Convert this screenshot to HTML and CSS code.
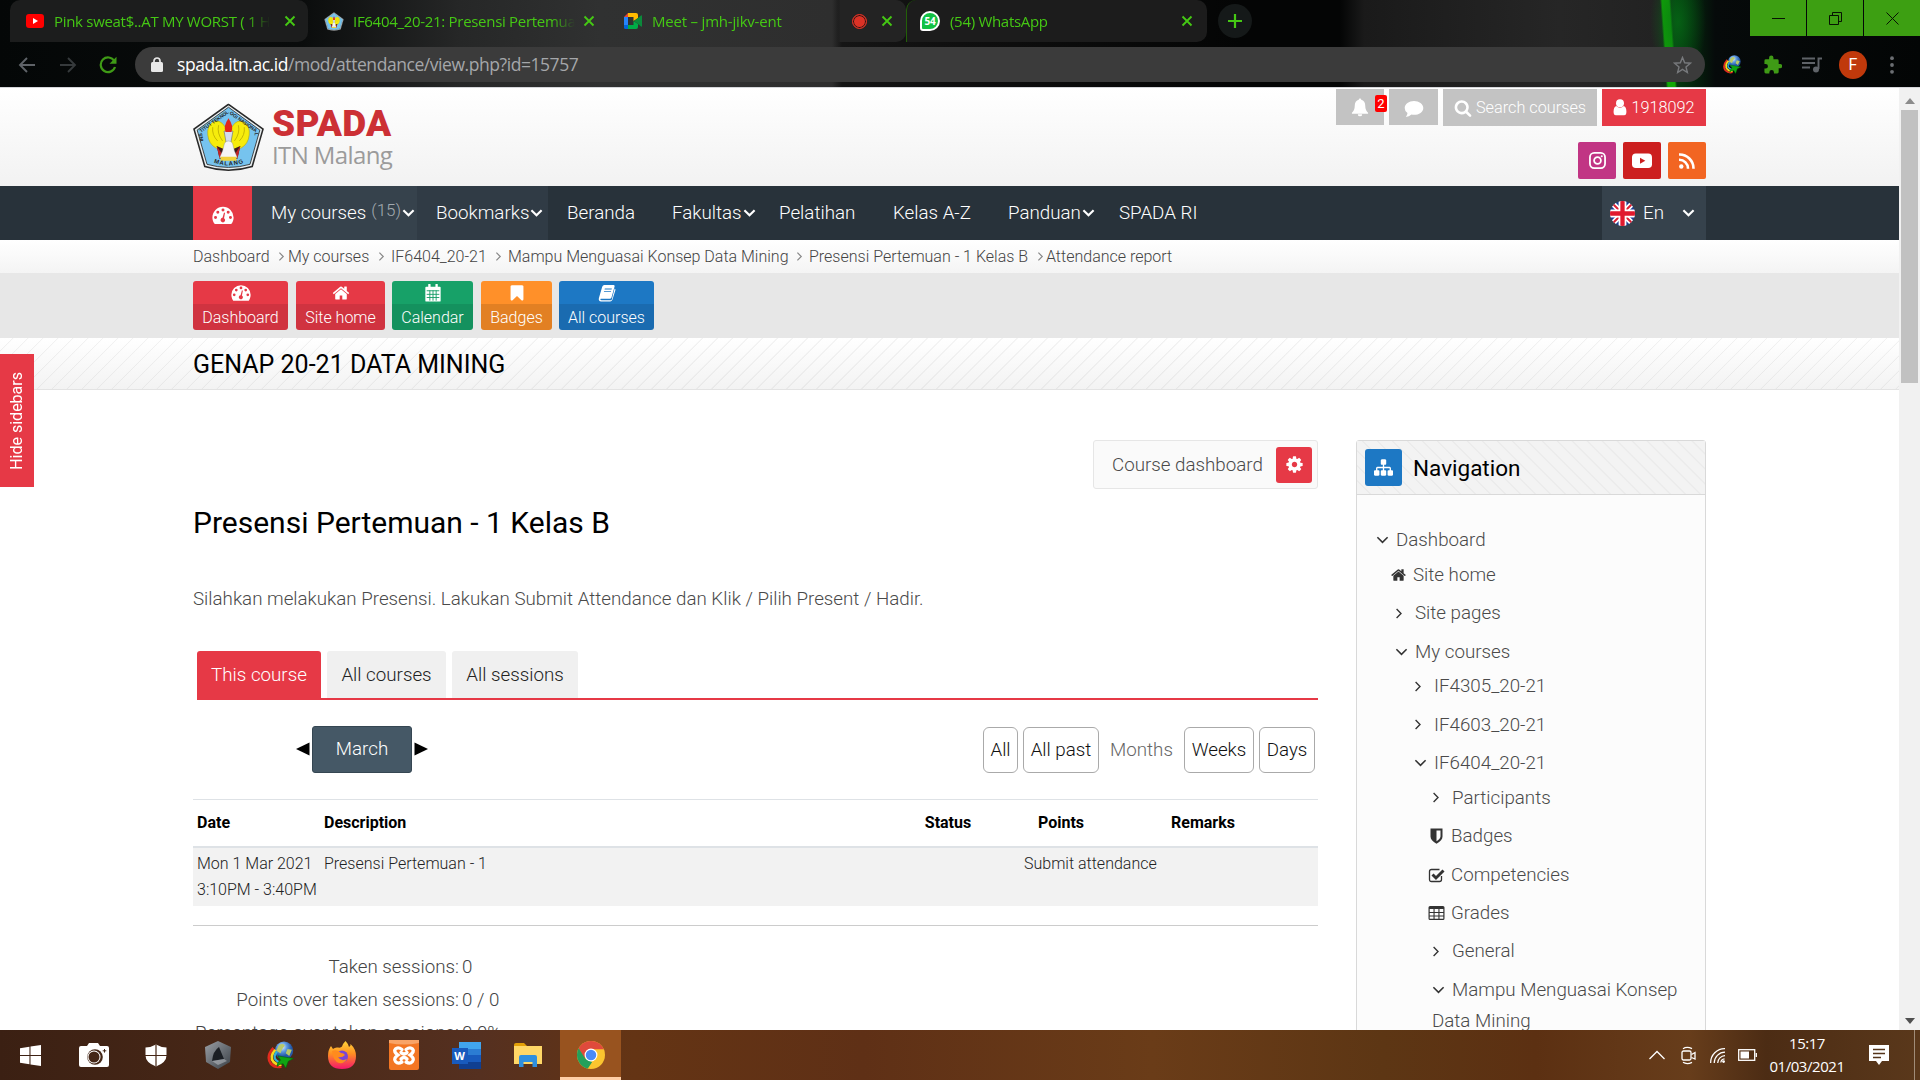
FILE: index.html
```html
<!DOCTYPE html>
<html lang="en">
<head>
<meta charset="utf-8">
<title>IF6404_20-21: Presensi Pertemuan - 1 Kelas B</title>
<link rel="stylesheet" href="styles.css">
</head>
<body>
<svg class="defs" aria-hidden="true">
  <defs>
    <linearGradient id="grad-fox" x1="0" y1="0" x2="0" y2="1"><stop offset="0" stop-color="#ffd43a"/><stop offset=".45" stop-color="#ff9022"/><stop offset="1" stop-color="#f5156c"/></linearGradient>
    <linearGradient id="grad-hex" x1="0" y1="0" x2="1" y2="1"><stop offset="0" stop-color="#9a9fa5"/><stop offset="1" stop-color="#3a4046"/></linearGradient>
    <radialGradient id="grad-globe" cx=".4" cy=".3"><stop offset="0" stop-color="#e9f3ff"/><stop offset=".5" stop-color="#5f9be0"/><stop offset="1" stop-color="#2458a8"/></radialGradient>
    <clipPath id="clip-flag"><circle cx="16" cy="16" r="16"/></clipPath>
    <clipPath id="clip-chrome"><circle cx="24" cy="24" r="24"/></clipPath>
  </defs>
  <symbol id="i-home" viewBox="0 0 1792 1792"><path d="M1472 992v480q0 26-19 45t-45 19h-384v-384h-256v384h-384q-26 0-45-19t-19-45v-480q0-1 .5-3t.5-3l575-474 575 474q1 2 1 6zm223-69l-62 74q-8 9-21 11h-3q-13 0-21-7l-692-577-692 577q-12 8-24 7-13-2-21-11l-62-74q-8-10-7-23.5t11-21.5l719-599q32-26 76-26t76 26l244 204v-195q0-14 9-23t23-9h192q14 0 23 9t9 23v408l219 182q10 8 11 21.5t-7 23.5z"/></symbol>
  <symbol id="i-bookmark" viewBox="0 0 1792 1792"><path d="M1420 128q23 0 44 9 33 13 52.500 41t19.500 62v1289q0 34-19.500 62t-52.500 41q-19 8-44 8-48 0-83-32l-441-424-441 424q-36 33-83 33-23 0-44-9-33-13-52.500-41t-19.500-62v-1289q0-34 19.500-62t52.500-41q21-9 44-9h1048z"/></symbol>
  <symbol id="i-cog" viewBox="0 0 1792 1792"><path d="M1152 896q0-106-75-181t-181-75-181 75-75 181 75 181 181 75 181-75 75-181zm512-109v222q0 12-8 23t-20 13l-185 28q-19 54-39 91 35 50 107 138 10 12 10 25t-9 23q-27 37-99 108t-94 71q-12 0-26-9l-138-108q-44 23-91 38-16 136-29 186-7 28-36 28h-222q-14 0-24.500-8.500t-11.500-21.500l-28-184q-49-16-90-37l-141 107q-10 9-25 9-14 0-25-11-126-114-165-168-7-10-7-23 0-12 8-23 15-21 51-66.500t54-70.500q-27-50-41-99l-183-27q-13-2-21-12.500t-8-23.500v-222q0-12 8-23t19-13l186-28q14-46 39-92-40-57-107-138-10-12-10-24 0-10 9-23 26-36 98.500-107.500t94.500-71.500q13 0 26 10l138 107q44-23 91-38 16-136 29-186 7-28 36-28h222q14 0 24.500 8.500t11.500 21.500l28 184q49 16 90 37l142-107q9-9 24-9 13 0 25 10 129 119 165 170 7 8 7 22 0 12-8 23-15 21-51 66.500t-54 70.500q26 50 41 98l183 28q13 2 21 12.500t8 23.500z"/></symbol>
  <symbol id="i-sitemap" viewBox="0 0 1792 1792"><path d="M1792 1248v320q0 40-28 68t-68 28h-320q-40 0-68-28t-28-68v-320q0-40 28-68t68-28h96v-192h-512v192h96q40 0 68 28t28 68v320q0 40-28 68t-68 28h-320q-40 0-68-28t-28-68v-320q0-40 28-68t68-28h96v-192h-512v192h96q40 0 68 28t28 68v320q0 40-28 68t-68 28h-320q-40 0-68-28t-28-68v-320q0-40 28-68t68-28h96v-192q0-52 38-90t90-38h512v-192h-96q-40 0-68-28t-28-68v-320q0-40 28-68t68-28h320q40 0 68 28t28 68v320q0 40-28 68t-68 28h-96v192h512q52 0 90 38t38 90v192h96q40 0 68 28t28 68z"/></symbol>
  <symbol id="i-search" viewBox="0 0 1792 1792"><path d="M1216 832q0-185-131.500-316.500t-316.500-131.500-316.500 131.500-131.500 316.500 131.500 316.500 316.500 131.500 316.500-131.500 131.500-316.500zm512 832q0 52-38 90t-90 38q-54 0-90-38l-343-342q-179 124-399 124-143 0-273.500-55.500t-225-150-150-225-55.500-273.500 55.500-273.500 150-225 225-150 273.500-55.500 273.500 55.500 225 150 150 225 55.500 273.500q0 220-124 399l343 343q37 37 37 90z"/></symbol>
  <symbol id="i-gauge" viewBox="0 0 28 24"><path fill-rule="evenodd" d="M14 1A13.500 13.500 0 0 0 .5 14.500c0 2.800.8 5.300 2.200 7.500.3.500.7.700 1.200.7h20.200c.5 0 .9-.2 1.200-.7 1.400-2.200 2.200-4.700 2.200-7.500A13.500 13.500 0 0 0 14 1zM4.500 12.600a1.900 1.900 0 1 1 0 3.800 1.900 1.900 0 0 1 0-3.800zM7.400 6a1.900 1.900 0 1 1 0 3.800 1.900 1.900 0 0 1 0-3.800zM14 3a1.900 1.900 0 1 1 0 3.800A1.900 1.900 0 0 1 14 3zM20.600 6a1.900 1.900 0 1 1 0 3.800 1.900 1.900 0 0 1 0-3.800zM23.500 12.600a1.900 1.900 0 1 1 0 3.800 1.900 1.900 0 0 1 0-3.800zM15.300 8.300l1.300.4-1.300 6.700a2.900 2.900 0 1 1-1.900-.4z"/></symbol>
  <symbol id="i-calendar" viewBox="0 0 18 20"><path d="M1.500 3h15a1 1 0 0 1 1 1v14.500a1 1 0 0 1-1 1h-15a1 1 0 0 1-1-1V4a1 1 0 0 1 1-1z"/><path d="M5 .8v4M13 .8v4" stroke="currentColor" stroke-width="2.600" stroke-linecap="round"/><path d="M2 7.500h14M2 11.500h14M2 15h14M5.500 7v11.500M9 7v11.500M12.500 7v11.500" stroke="#149c64" stroke-width="1" fill="none"/></symbol>
  <symbol id="i-book" viewBox="0 0 20 20"><path fill-rule="evenodd" d="M7 1h10.500q1.300.2 1 1.500L15 15q-.4 1.500-2 1.500H3.200q-.7 0-.6.700.2.900 1.400.9h10q1 0 1.300-1L18.500 5q1.200.6.900 1.800L16 17.500q-.6 2-2.500 2H3.500Q.2 19 1 15.500L4.700 3Q5.300 1 7 1zm.6 4L7.300 6h7.800l.3-1zM6.800 8l-.3 1h7.800l.3-1z"/></symbol>
  <symbol id="i-bell" viewBox="0 0 18 20"><path d="M9 .5a1.300 1.300 0 0 1 1.300 1.400C13 2.500 14.500 4.800 14.500 8c0 4 1.300 6.200 3 7.600v.9H.5v-.9C2.200 14.200 3.500 12 3.500 8c0-3.200 1.500-5.500 4.200-6.100A1.300 1.300 0 0 1 9 .5zM6.700 17h4.600a2.300 2.300 0 0 1-4.600 0z"/></symbol>
  <symbol id="i-comment" viewBox="0 0 20 18"><path d="M10 1c5 0 9.300 2.900 9.300 6.900S15 14.800 10 14.800q-1.300 0-2.500-.2Q5 16.800 1.800 17q1.500-1.600 1.700-3.900Q.7 11 .7 7.900C.7 3.900 5 1 10 1z"/></symbol>
  <symbol id="i-user" viewBox="0 0 14 18"><circle cx="7" cy="4.500" r="4.200"/><path d="M3 7.500q1.800 1.800 4 1.800t4-1.800q2.700.8 2.800 6 0 3.800-2.500 3.800H2.700q-2.500 0-2.500-3.800.1-5.200 2.800-6z"/></symbol>
  <symbol id="i-down" viewBox="0 0 14 10"><path class="chev" d="M1.500 2l5.500 5.500L12.500 2"/></symbol>
  <symbol id="i-right" viewBox="0 0 10 14"><path class="chev" d="M2 1.500L7.500 7 2 12.500"/></symbol>
  <symbol id="i-x" viewBox="0 0 12 12"><path d="M1.500 1.500l9 9m0-9l-9 9" fill="none" stroke="currentColor" stroke-width="1.900"/></symbol>
  <symbol id="i-crest" viewBox="0 0 72 69">
    <path d="M36 .8L71 26 60 64Q36 71.500 12 64L1 26z" fill="#e8eef0" stroke="#2a2a2a" stroke-width="1.600"/>
    <path d="M36 3.800L67.800 27 57.800 61.700Q36 68 14.200 61.700L4.200 27z" fill="#76c3ee" stroke="#333" stroke-width=".9"/>
    <path d="M32 23Q27 15.500 20 19q-6 4-5 13 1 9 8 13l13 5 13-5q7-4 8-13 1-9-5-13-7-3.500-12 4l-4 6z" fill="#f6ec0c" stroke="#b9a800" stroke-width=".6"/>
    <path d="M20 24q-1 8 5 14M26 22q-2 8 4 16M52 24q1 8-5 14M46 22q2 8-4 16" fill="none" stroke="#b9a800" stroke-width=".8"/>
    <path d="M31.500 28h9l-2.500 14h-4z" fill="#d3dcec" stroke="#667" stroke-width=".6"/>
    <path d="M36 15q5.500 8 3 14h-6q-2.500-6 3-14z" fill="#e1261c"/>
    <path d="M24 43l9 4 3 3 3-3 9-4-3 13H27z" fill="#3c1a1c"/><path d="M24 43l6 9-3 4zM48 43l-6 9 3 4z" fill="#c32425"/>
    <path d="M32 40q4-4 8 0l2 8 3 7H27l3-7z" fill="#f5f5f5" stroke="#888" stroke-width=".4"/><path d="M28 54h16v4H28z" fill="#f1d23a"/>
  </symbol>
  <symbol id="i-idm" viewBox="0 0 32 32">
    <circle cx="20" cy="11" r="10.500" fill="url(#grad-globe)"/><path d="M14 5q4-3 7 0l-3 4-2 5-5-3zM24 9l5 1-3 7-4-3z" fill="#b8c96a"/>
    <path d="M8 8Q-1 18 5 26q5 5 12 3" fill="none" stroke="#e32b1e" stroke-width="3"/>
    <path d="M10 10Q3 18 8 24q4 4 9 3" fill="none" stroke="#f7d71f" stroke-width="3"/>
    <path d="M12 12q-5 6-1 10 3 3 7 2" fill="none" stroke="#2fb0d8" stroke-width="2.500"/>
    <path d="M13 17l18 3-6 3-3 8-3-5q-4 0-7 3 0-5 4-7z" fill="#0fa512" stroke="#075e08" stroke-width=".7"/>
  </symbol>
</svg>

<header class="browser">
  <div class="tabstrip">
    <div class="tab tab--first">
      <svg class="tab__icon" viewBox="0 0 18 14"><rect width="18" height="14" rx="3" fill="#f00"/><path d="M7 4l5 3-5 3z" fill="#fff"/></svg>
      <span class="tab__title">Pink sweat$..AT MY WORST ( 1 HOUR )</span>
      <svg class="tab__close"><use href="#i-x"/></svg>
    </div>
    <div class="tab tab--active">
      <svg class="tab__icon tab__icon--crest"><use href="#i-crest"/></svg>
      <span class="tab__title">IF6404_20-21: Presensi Pertemuan - 1</span>
      <svg class="tab__close"><use href="#i-x"/></svg>
    </div>
    <div class="tab tab--meet">
      <svg class="tab__icon" viewBox="0 0 18 16"><path d="M4 0h8q2 0 2 2v3L9.500 8V4H4z" fill="#ffba00"/><path d="M0 4h4v8H0z" fill="#2684fc"/><path d="M4 0v4H0z" fill="#ea4335"/><path d="M0 12h4v4H1.500Q0 16 0 14.500z" fill="#0066da"/><path d="M4 12h5.500V8L14 11v3q0 2-2 2H4z" fill="#00ac47"/><path d="M14 5l3-2.500q1-.5 1 .5v10q0 1-1 .5L14 11 10 8z" fill="#0b8a3b"/></svg>
      <span class="tab__title">Meet – jmh-jikv-ent</span>
      <span class="tab__record"></span>
      <svg class="tab__close"><use href="#i-x"/></svg>
    </div>
    <div class="tab tab--whatsapp">
      <span class="wa-badge">54</span>
      <span class="tab__title">(54) WhatsApp</span>
      <svg class="tab__close"><use href="#i-x"/></svg>
    </div>
    <span class="new-tab"><svg viewBox="0 0 14 14"><path d="M7 0v14M0 7h14" stroke="currentColor" stroke-width="2.200"/></svg></span>
    <div class="win-buttons">
      <span><svg viewBox="0 0 13 13"><path d="M0 6.500h13"/></svg></span>
      <span><svg viewBox="0 0 13 13"><path d="M.5 3.500h9v9h-9zM3.500 3V.5h9v9H10"/></svg></span>
      <span><svg viewBox="0 0 13 13"><path d="M.5.5l12 12m0-12l-12 12"/></svg></span>
    </div>
  </div>
  <div class="toolbar">
    <svg class="tool tool--back" viewBox="0 0 18 16"><path d="M17 8H2m7-7L2 8l7 7"/></svg>
    <svg class="tool tool--forward" viewBox="0 0 18 16"><path d="M1 8h15M9 1l7 7-7 7"/></svg>
    <svg class="tool tool--reload" viewBox="0 0 18 18"><path d="M15.300 5A7.300 7.300 0 1 0 16 11"/><path d="M17.500.8v7H10.500z" fill="currentColor" stroke="none"/></svg>
    <div class="omnibox">
      <svg class="omnibox__lock" viewBox="0 0 12 15"><rect y="5" width="12" height="10" rx="1.500" fill="#e8e8e8"/><path d="M3 6V4a3 3 0 0 1 6 0v2" fill="none" stroke="#e8e8e8" stroke-width="1.700"/></svg>
      <span class="omnibox__url"><b>spada.itn.ac.id</b>/mod/attendance/view.php?id=15757</span>
      <svg class="omnibox__star" viewBox="0 0 20 19"><path d="M10 1.500l2.300 5.600 6 .5-4.600 3.900 1.400 5.900L10 14.200l-5.100 3.200 1.400-5.900L1.700 7.600l6-.5z" fill="none" stroke="#77797c" stroke-width="1.500"/></svg>
    </div>
    <svg class="tool tool--idm"><use href="#i-idm"/></svg>
    <svg class="tool tool--puzzle" viewBox="0 0 20 20"><path d="M18 9.500h-1.500V6q0-1.500-1.500-1.500h-4V2.800a2.300 2.300 0 0 0-4.600 0v1.700H3Q1.500 4.500 1.500 6v3.500h1.300a2.400 2.400 0 0 1 0 4.800H1.500V18q0 1.500 1.500 1.500h3.700v-1.300a2.400 2.400 0 0 1 4.800 0v1.300H15q1.500 0 1.500-1.500v-4H18a2.200 2.200 0 0 0 0-4.500z" fill="#3f9a16" stroke="none"/></svg>
    <svg class="tool tool--queue" viewBox="0 0 20 16"><path d="M0 1.500h13M0 6h13M0 10.500h8M16.500 12V1.500H20"/><circle cx="14" cy="12.500" r="3" fill="#5f6368" stroke="none"/></svg>
    <span class="avatar">F</span>
    <svg class="tool tool--dots" viewBox="0 0 4 18"><circle cx="2" cy="2.200" r="1.900"/><circle cx="2" cy="9" r="1.900"/><circle cx="2" cy="15.800" r="1.900"/></svg>
  </div>
</header>

<div class="viewport">
  <div class="site">
    <div class="topbar">
      <div class="brand">
        <svg class="brand__crest" viewBox="0 0 72 69">
          <use href="#i-crest" width="72" height="69"/>
          <path id="crest-top" d="M10.500 38L9 29 36 10 63 29 61.500 39" fill="none"/>
          <path id="crest-bottom" d="M21 60q15 5.500 31 0" fill="none"/>
          <text class="crest-text"><textPath href="#crest-top">INSTITUT TEKNOLOGI NASIONAL</textPath></text>
          <text class="crest-text crest-text--lower"><textPath href="#crest-bottom">MALANG</textPath></text>
        </svg>
        <div class="brand__name"><span class="brand__title">SPADA</span><span class="brand__sub">ITN Malang</span></div>
      </div>
      <div class="topbar__right">
        <div class="userbar">
          <span class="ubtn ubtn--bell"><svg><use href="#i-bell"/></svg><em>2</em></span>
          <span class="ubtn ubtn--comment"><svg><use href="#i-comment"/></svg></span>
          <span class="ubtn ubtn--search"><svg><use href="#i-search"/></svg><span>Search courses</span></span>
          <span class="ubtn ubtn--user"><svg><use href="#i-user"/></svg><span>1918092</span></span>
        </div>
        <div class="social">
          <span class="social__ig"><svg viewBox="0 0 18 18"><rect x="1" y="1" width="16" height="16" rx="4.500" fill="none" stroke="#fff" stroke-width="1.900"/><circle cx="9" cy="9" r="3.600" fill="none" stroke="#fff" stroke-width="1.900"/><circle cx="13.500" cy="4.500" r="1.100" fill="#fff"/></svg></span>
          <span class="social__yt"><svg viewBox="0 0 20 16"><rect y=".5" width="20" height="14.500" rx="3.800" fill="#fff"/><path d="M8 4.800l5.300 3L8 10.800z" fill="#cc1f1f"/></svg></span>
          <span class="social__rss"><svg viewBox="0 0 16 16"><circle cx="2.300" cy="13.500" r="2.200" fill="#fff"/><path d="M0 6.800a8.700 8.700 0 0 1 9 9M0 1.500a14 14 0 0 1 14.500 14.300" fill="none" stroke="#fff" stroke-width="2.600"/></svg></span>
        </div>
      </div>
    </div>

    <nav class="mainnav">
      <a class="mainnav__dash"><svg><use href="#i-gauge"/></svg></a>
      <a class="mainnav__item mainnav__item--courses"><span>My courses</span><sup>(15)</sup><svg><use href="#i-down"/></svg></a>
      <a class="mainnav__item mainnav__item--bookmarks"><span>Bookmarks</span><svg><use href="#i-down"/></svg></a>
      <a class="mainnav__item mainnav__item--beranda"><span>Beranda</span></a>
      <a class="mainnav__item mainnav__item--fakultas"><span>Fakultas</span><svg><use href="#i-down"/></svg></a>
      <a class="mainnav__item mainnav__item--pelatihan"><span>Pelatihan</span></a>
      <a class="mainnav__item mainnav__item--kelas"><span>Kelas A-Z</span></a>
      <a class="mainnav__item mainnav__item--panduan"><span>Panduan</span><svg><use href="#i-down"/></svg></a>
      <a class="mainnav__item"><span>SPADA RI</span></a>
      <a class="lang">
        <svg class="lang__flag" viewBox="0 0 32 32"><g clip-path="url(#clip-flag)"><path fill="#1d3f94" d="M0 0h32v32H0z"/><path d="M0 0l32 32M32 0L0 32" stroke="#fff" stroke-width="7"/><path d="M0 0l32 32M32 0L0 32" stroke="#dd2033" stroke-width="2.500"/><path d="M16 0v32M0 16h32" stroke="#fff" stroke-width="10"/><path d="M16 0v32M0 16h32" stroke="#e01a2e" stroke-width="5.500"/></g></svg>
        <span>En</span><svg class="lang__arrow"><use href="#i-down"/></svg>
      </a>
    </nav>

    <div class="crumbs">
      <a class="crumb crumb--1">Dashboard</a><svg><use href="#i-right"/></svg>
      <a class="crumb crumb--2">My courses</a><svg><use href="#i-right"/></svg>
      <a class="crumb crumb--3">IF6404_20-21</a><svg><use href="#i-right"/></svg>
      <a class="crumb crumb--4">Mampu Menguasai Konsep Data Mining</a><svg><use href="#i-right"/></svg>
      <a class="crumb crumb--5">Presensi Pertemuan - 1 Kelas B</a><svg><use href="#i-right"/></svg>
      <span class="crumb crumb--6">Attendance report</span>
    </div>

    <div class="shortcuts">
      <a class="shortcut shortcut--dash"><svg><use href="#i-gauge"/></svg><span>Dashboard</span></a>
      <a class="shortcut shortcut--home"><svg><use href="#i-home"/></svg><span>Site home</span></a>
      <a class="shortcut shortcut--cal"><svg><use href="#i-calendar"/></svg><span>Calendar</span></a>
      <a class="shortcut shortcut--badge"><svg><use href="#i-bookmark"/></svg><span>Badges</span></a>
      <a class="shortcut shortcut--all"><svg><use href="#i-book"/></svg><span>All courses</span></a>
    </div>

    <div class="coursebar"><h1>GENAP 20-21 DATA MINING</h1></div>

    <div class="columns">
      <main class="content">
        <div class="course-dash"><span>Course dashboard</span><b><svg><use href="#i-cog"/></svg></b></div>
        <h2>Presensi Pertemuan - 1 Kelas B</h2>
        <p class="intro">Silahkan melakukan Presensi. Lakukan Submit Attendance dan Klik / Pilih Present / Hadir.</p>
        <div class="tabs">
          <a class="tabs__item tabs__item--on">This course</a>
          <a class="tabs__item tabs__item--courses">All courses</a>
          <a class="tabs__item tabs__item--sessions">All sessions</a>
        </div>
        <div class="period">
          <svg class="period__arrow" viewBox="0 0 14 14"><path d="M0 7L13.500.5v13z"/></svg>
          <span class="period__month">March</span>
          <svg class="period__arrow" viewBox="0 0 14 14"><path d="M14 7L.5.500v13z"/></svg>
          <div class="views">
            <a class="views__all">All</a><a class="views__past">All past</a><span class="views__months">Months</span><a class="views__weeks">Weeks</a><a class="views__days">Days</a>
          </div>
        </div>
        <div class="table">
          <div class="table__row table__row--head"><span>Date</span><span>Description</span><span class="center">Status</span><span class="center">Points</span><span class="center">Remarks</span></div>
          <div class="table__row table__row--body"><span>Mon 1 Mar 2021<br>3:10PM - 3:40PM</span><span>Presensi Pertemuan - 1</span><span class="submit">Submit attendance</span></div>
        </div>
        <hr>
        <dl class="stats">
          <dt>Taken sessions:</dt><dd>0</dd>
          <dt>Points over taken sessions:</dt><dd>0 / 0</dd>
          <dt>Percentage over taken sessions:</dt><dd>0.0%</dd>
        </dl>
      </main>

      <aside class="block">
        <div class="block__head"><b><svg><use href="#i-sitemap"/></svg></b><h3>Navigation</h3></div>
        <div class="tree">
          <div class="node node--1"><svg class="down"><use href="#i-down"/></svg><span>Dashboard</span></div>
          <div class="branch">
            <div class="node node--icon2"><svg class="glyph"><use href="#i-home"/></svg><span>Site home</span></div>
            <div class="node node--2"><svg class="right"><use href="#i-right"/></svg><span>Site pages</span></div>
            <div class="node node--2"><svg class="down"><use href="#i-down"/></svg><span>My courses</span></div>
            <div class="branch">
              <div class="node node--3"><svg class="right"><use href="#i-right"/></svg><span>IF4305_20-21</span></div>
              <div class="node node--3"><svg class="right"><use href="#i-right"/></svg><span>IF4603_20-21</span></div>
              <div class="node node--3"><svg class="down"><use href="#i-down"/></svg><span>IF6404_20-21</span></div>
              <div class="branch">
                <div class="node node--4"><svg class="right"><use href="#i-right"/></svg><span>Participants</span></div>
                <div class="node node--icon4"><svg class="glyph" viewBox="0 0 16 16"><path fill-rule="evenodd" d="M2 .5h12v8q0 4-6 7.300Q2 12.500 2 8.500zM8 2.500v10.800q4-2.400 4-5V2.500z"/></svg><span>Badges</span></div>
                <div class="node node--icon4"><svg class="glyph" viewBox="0 0 16 16"><path d="M13 9v3.500q0 2-2 2H3q-2 0-2-2v-8q0-2 2-2h8" fill="none" stroke="currentColor" stroke-width="1.300"/><path d="M4 7.500l3.500 3.500L15 3.500" fill="none" stroke="currentColor" stroke-width="2.900"/></svg><span>Competencies</span></div>
                <div class="node node--icon4"><svg class="glyph" viewBox="0 0 16 16"><path fill-rule="evenodd" d="M1.500 1h13q1.500 0 1.500 1.500v11q0 1.500-1.500 1.500h-13Q0 15 0 13.500v-11Q0 1 1.500 1zM1.200 4v2.900h3.800V4zm4.900 0v2.900h3.800V4zm4.900 0v2.900h3.800V4zM1.200 7.900v2.500h3.800V7.900zm4.900 0v2.500h3.800V7.900zm4.900 0v2.500h3.800V7.900zM1.200 11.400v2.400h3.800v-2.400zm4.900 0v2.400h3.800v-2.400zm4.900 0v2.400h3.800v-2.400z"/></svg><span>Grades</span></div>
                <div class="node node--4"><svg class="right"><use href="#i-right"/></svg><span>General</span></div>
                <div class="node node--4"><svg class="down"><use href="#i-down"/></svg><span>Mampu Menguasai Konsep</span></div>
                <div class="node node--wrap"><span>Data Mining</span></div>
              </div>
            </div>
          </div>
        </div>
      </aside>
    </div>
    <div class="hide-sidebars"><span>Hide sidebars</span></div>
  </div>
  <div class="scrollbar">
    <svg class="scrollbar__up" viewBox="0 0 10 6"><path d="M0 6l5-6 5 6z"/></svg>
    <i class="scrollbar__thumb"></i>
    <svg class="scrollbar__down" viewBox="0 0 10 6"><path d="M0 0l5 6 5-6z"/></svg>
  </div>
</div>

<footer class="taskbar">
  <span class="task task--start"><svg class="task__win" viewBox="0 0 20 20"><path d="M0 3l9-1.300v7.800H0zM10 1.500L20 0v9.500H10zM0 10.500h9v7.800L0 17zM10 10.500h10V20l-10-1.500z" fill="#fff"/></svg></span>
  <span class="task"><svg class="task__cam" viewBox="0 0 30 24"><path d="M2 3h6l2-3h9l2 3h7q2 0 2 2v17q0 2-2 2H2q-2 0-2-2V5q0-2 2-2z" fill="#fff"/><circle cx="16" cy="14" r="7.800" fill="#452717"/><circle cx="15" cy="14" r="6.500" fill="#fff"/><circle cx="15" cy="14" r="5.500" fill="#452717"/><path d="M25.500 6v3.600M23.700 7.800h3.600" stroke="#452717"/></svg></span>
  <span class="task"><svg class="task__shield" viewBox="0 0 22 22"><path d="M11 0q4 2.500 10.500 3v8q0 7-10.500 11Q.5 18 .5 11V3Q7 2.500 11 0z" fill="#fff"/><path d="M11 0v22M0 11h22" stroke="#452717" stroke-width="1.200"/></svg></span>
  <span class="task"><svg class="task__hex" viewBox="0 0 26 28"><path d="M13 0l13 6-1 15-12 7L1 21 0 6z" fill="url(#grad-hex)"/><path d="M14 6l5 12-12 2q1-10 7-14z" fill="#1b1f24"/><path d="M19 18l3 2-9 4-6-4z" fill="#c3c8cd" fill-opacity=".5"/></svg></span>
  <span class="task"><svg class="task__idm"><use href="#i-idm"/></svg></span>
  <span class="task"><svg class="task__fox" viewBox="0 0 28 28"><path d="M17.500 0q3 3 3.500 6 2-1 1.500-3 5.500 5 5.500 12 0 13-14 13Q0 28 0 15q0-6 3-10l2 3q2-2 5-1.500 3 .5 4-1Q14.500 3 17.500 0z" fill="url(#grad-fox)"/><circle cx="14" cy="15.500" r="6" fill="#7a45d8"/><path d="M4 10q5-2 9 2 3 0 4 2-3 3-7 2 3 5 9 2-3 5-8 4-6-2-7-12z" fill="#ff8b1d"/></svg></span>
  <span class="task"><svg class="task__xampp" viewBox="0 0 30 30"><rect width="30" height="30" rx="2" fill="#f37623"/><path d="M0 0h30v3q-15 3-30 0z" fill="#f9a467"/><path d="M13 9.500Q9 6.500 6.500 9T9 15q-5 3.500-2.500 6.500t6.500.5M17 9.500q4-3 6.500-.5T21 15q5 3.500 2.500 6.500T17 22M12 12.500q3 3 6 0M12 19q3-3 6 0" fill="none" stroke="#fff" stroke-width="3.300" stroke-linecap="round"/></svg></span>
  <span class="task"><span class="word"><i></i><b>W</b></span></span>
  <span class="task"><svg class="task__folder" viewBox="0 0 28 24"><path d="M0 2q0-2 2-2h8l3 3H0z" fill="#e3a008"/><path d="M0 3h28v18H0z" fill="#ffd767"/><path d="M5 24V14q0-2 2-2h14q2 0 2 2v10h-4.500v-5h-9v5z" fill="#2f8fdf"/></svg></span>
  <span class="task task--on"><svg class="task__chrome" viewBox="0 0 48 48"><g clip-path="url(#clip-chrome)"><path d="M0 0h48v48H0z" fill="#fbc52f"/><path d="M0 0h48v14H24L13 30 0 10z" fill="#df4a3c"/><path d="M0 8l14 22 12 6-8 12H0z" fill="#23a05b"/></g><circle cx="24" cy="24" r="11" fill="#fff"/><circle cx="24" cy="24" r="9" fill="#4a8af4"/></svg></span>
  <div class="tray">
    <svg class="tray__up" viewBox="0 0 16 10"><path d="M.5 9L8 1.500 15.500 9"/></svg>
    <svg class="tray__cam" viewBox="0 0 15 18"><rect x="1" y="4.500" width="9" height="9" rx="1.500"/><path d="M10.500 8L14 6v6.500L10.500 11M2 2.200q4-2.500 9 0M2 15.800q4 2.500 9 0"/></svg>
    <svg class="tray__wifi" viewBox="0 0 16 16"><path d="M.7 16A15 15 0 0 1 16 .7M4.500 16A11.500 11.500 0 0 1 16 4.500M8.200 16A8 8 0 0 1 16 8.200M11.500 15.500a4.500 4.500 0 0 1 4-4"/><circle cx="14.500" cy="14.500" r="1.500" fill="#fff" stroke="none"/></svg>
    <svg class="tray__bat" viewBox="0 0 19 12"><rect x=".7" y=".7" width="16" height="10.600"/><path d="M18.300 4v4"/><rect x="2.500" y="2.500" width="8.500" height="7" fill="#fff" stroke="none"/></svg>
    <div class="clock"><span>15:17</span><span>01/03/2021</span></div>
    <svg class="tray__note" viewBox="0 0 20 20"><path d="M0 0h20v16h-7l-3 4-3-4H0z" fill="#fff" stroke="none"/><path d="M4 4.500h12M4 8.500h12M4 12.500h8" stroke="#55351a" stroke-width="1.300"/></svg>
  </div>
</footer>
</body>
</html>
```

FILE: styles.css
```css
* { box-sizing: border-box; }
body { margin: 0; width: 1920px; height: 1080px; overflow: hidden; display: flex; flex-direction: column; font-family: Roboto, "Liberation Sans", sans-serif; font-weight: 300; font-size: 18.75px; color: #4a4a4a; background: #fff; }
svg { display: block; flex: none; fill: currentColor; }
.defs { position: absolute; width: 0; height: 0; }
.chev { fill: none; stroke: currentColor; stroke-width: var(--chev, 1.7); }
.crest-text { font: 700 5px "Liberation Sans", sans-serif; fill: #222; letter-spacing: -.1px; }
.crest-text--lower { font-size: 6px; letter-spacing: .9px; }

/* Browser window */
.browser { height: 88px; flex: none; border-bottom: 1.500px solid #d5d6da; font-family: "Open Sans", "Noto Sans", sans-serif; font-weight: 400; color: #45c814;
  background:
    radial-gradient(ellipse 28px 60px at 1678px 22px, rgba(6,110,22,.75), transparent),
    linear-gradient(86deg, transparent 1662px, #12a806 1664px, #12a806 1671px, transparent 1673px),
    linear-gradient(90deg, #040707 0, #0a0c0c 300px, #262727 460px, #303131 600px, #2e2e2e 832px, #151515 842px, #0f0f0f 960px, #040505 1240px, #040505 1340px, #1a1a1a 1364px, #262626 1560px, #222 1658px, #053a10 1676px, #060a0a 1715px, #030505 100%); }
.tabstrip { height: 42px; display: flex; align-items: center; }
.tab { height: 42px; display: flex; align-items: center; font-size: 15px; letter-spacing: -.3px; }
.tab--first { width: 298px; margin-left: 10px; padding: 0 12px 0 16px; background: #1c1d1d; border-radius: 10px 10px 10px 0; }
.tab--active { width: 308px; padding: 0 21px 0 16px; margin-right: -8px; }
.tab--meet { width: 298px; padding: 0 13px 0 16px; background: linear-gradient(90deg, transparent 0 77%, #232323 78%); border-radius: 0 10px 10px 0; }
.tab--whatsapp { width: 301px; padding: 0 14px 0 13px; background: #1c1c1c; border-radius: 10px 10px 10px 0; border-left: 1px solid #236008; }
.tab__icon { width: 18px; height: 16px; }
.tab__icon--crest { width: 20px; height: 19px; }
.tab__title { flex: 1; margin: 0 14px 0 10px; white-space: nowrap; overflow: hidden; line-height: 22px; -webkit-mask: linear-gradient(90deg, #000 calc(100% - 24px), transparent); mask: linear-gradient(90deg, #000 calc(100% - 24px), transparent); }
.tab--active .tab__title { margin: 0 8px 0 9px; }
.tab--meet .tab__title { letter-spacing: -.2px; }
.tab__close { width: 12px; height: 12px; }
.tab__record { width: 15px; height: 15px; margin-right: 14px; border-radius: 50%; background: #dc3226; border: 1px solid #dc3226; box-shadow: inset 0 0 0 1px #2a1512; }
.wa-badge { width: 20px; height: 20px; border-radius: 50% 50% 50% 15%; border: 2px solid #fff; background: #12c144; color: #fff; font: 700 10px/16px "Open Sans", sans-serif; text-align: center; }
.new-tab { width: 34px; height: 34px; margin-left: 11px; margin-bottom: 1px; border-radius: 50%; background: #151919; display: grid; place-items: center; }
.new-tab svg { width: 14px; height: 14px; }
.win-buttons { margin-left: auto; align-self: flex-start; height: 36px; display: flex; gap: 1px; color: #071303; }
.win-buttons span { width: 56px; background: #3d9f12; display: grid; place-items: center; }
.win-buttons svg { width: 13px; height: 13px; fill: none; stroke: currentColor; }
.toolbar { height: 45px; display: flex; align-items: center; }
.tool { fill: none; stroke: #5f6368; stroke-width: 1.900px; }
.tool--back { width: 18px; height: 16px; margin-left: 18px; }
.tool--forward { width: 18px; height: 16px; margin-left: 23px; stroke: #363a3c; }
.tool--reload { width: 18px; height: 18px; margin-left: 22px; stroke: #3f9a16; color: #3f9a16; stroke-width: 2.200px; }
.omnibox { width: 1570px; height: 35px; margin-left: 18px; padding: 0 13px 0 16px; border-radius: 18px; background: #3b3b3b; display: flex; align-items: center; }
.omnibox__lock { width: 12px; height: 15px; }
.omnibox__url { flex: 1; margin-left: 14px; padding-bottom: 1px; font-size: 17.500px; letter-spacing: -.44px; color: #a5a7aa; }
.omnibox__url b { font-weight: 400; color: #fff; }
.omnibox__star { width: 19px; height: 18px; }
.tool--idm { width: 20px; height: 19px; margin-left: 17px; stroke: none; }
.tool--puzzle { width: 19px; height: 19px; margin-left: 21px; }
.tool--queue { width: 20px; height: 16px; margin-left: 20px; }
.avatar { width: 28px; height: 28px; margin-left: 17px; border-radius: 50%; background: #c0390b; color: #fff; font: 400 16px/28px Roboto, sans-serif; text-align: center; }
.tool--dots { width: 4px; height: 18px; margin-left: 23px; fill: #6b6e72; stroke: none; }

/* Page */
.viewport { height: 942px; display: flex; overflow: hidden; }
.site { width: 1899px; position: relative; }
.topbar { height: 98px; padding: 0 193px; background: linear-gradient(#fff, #f2f2f2); display: flex; justify-content: space-between; }
.brand { display: flex; padding-top: 15px; }
.brand__crest { width: 71px; height: 69px; }
.brand__name { margin-left: 8px; display: flex; flex-direction: column; }
.brand__title { padding-top: 2px; font: 900 37px/38px Roboto, sans-serif; color: #cc3035; letter-spacing: .3px; }
.brand__sub { font: 400 24px/24px "Open Sans", sans-serif; color: #9b9b9b; letter-spacing: -.6px; }
.topbar__right { padding-top: 1px; display: flex; flex-direction: column; align-items: flex-end; }
.userbar { display: flex; gap: 5px; height: 37px; align-items: flex-start; }
.ubtn { height: 37px; background: #c3c3c3; color: #fff; display: flex; align-items: center; justify-content: center; font-size: 16px; position: relative; }
.ubtn--bell { width: 48px; height: 36px; }
.ubtn--bell svg { width: 18px; height: 19px; }
.ubtn--bell em { position: absolute; left: 39px; top: 6px; width: 12px; height: 17px; border-radius: 2px; background: #f00; font: 400 13px/17px Roboto, sans-serif; text-align: center; }
.ubtn--comment { width: 49px; height: 36px; }
.ubtn--comment svg { width: 20px; height: 18px; margin-top: 3px; }
.ubtn--search { width: 154px; gap: 4px; font-size: 16.250px; }
.ubtn--search svg { width: 18px; height: 18px; }
.ubtn--user { width: 104px; gap: 4px; background: #e63946; font-size: 16.250px; }
.ubtn--user svg { width: 14px; height: 17px; }
.social { display: flex; gap: 7px; margin-top: 16px; }
.social span { width: 38px; height: 37px; border-radius: 2px; display: grid; place-items: center; }
.social__ig { background: #c13584; } .social__yt { background: #cc1f1f; } .social__rss { background: #f26522; }
.social__ig svg { width: 17px; height: 17px; } .social__yt svg { width: 20px; height: 16px; } .social__rss svg { width: 16px; height: 16px; }

.mainnav { height: 54px; padding: 0 193px; background: #28323a; color: #fff; display: flex; --chev: 2.300; }
.mainnav__dash { width: 59px; background: #e63946; display: grid; place-items: center; padding-top: 5px; }
.mainnav__dash svg { width: 22px; height: 19px; }
.mainnav__item { padding-left: 19px; display: flex; align-items: center; font-size: 18.750px; font-weight: 300; }
.mainnav__item svg { width: 13px; height: 10px; margin-left: 1px; }
.mainnav__item sup { font-size: 17px; color: #a3aab0; margin: -6px 0 0 5px; line-height: 1; }
.mainnav__item--courses { width: 165px; background: #36424c; }
.mainnav__item--bookmarks { width: 131px; background: #303b45; }
.mainnav__item--beranda { width: 105px; }
.mainnav__item--fakultas { width: 107px; }
.mainnav__item--pelatihan { width: 114px; }
.mainnav__item--kelas { width: 115px; }
.mainnav__item--panduan { width: 111px; }
.lang { width: 104px; margin-left: auto; background: #36424c; display: flex; align-items: center; padding: 0 11px 0 8px; }
.lang__flag { width: 25px; height: 25px; margin-right: 8px; }
.lang__arrow { width: 13px; height: 10px; margin-left: auto; }

.crumbs { height: 33px; padding: 0 193px; display: flex; align-items: center; font-size: 16px; color: #444; background: linear-gradient(#fff, #f4f4f4); white-space: nowrap; }
.crumbs svg { width: 7px; height: 11px; color: #888; }
.crumb--1 { width: 85px; } .crumb--2 { width: 90px; margin-left: 3px; } .crumb--3 { width: 104px; margin-left: 6px; } .crumb--4 { width: 288px; margin-left: 6px; } .crumb--5 { width: 228px; margin-left: 6px; } .crumb--6 { margin-left: 2px; }

.shortcuts { height: 65px; padding: 8px 193px; background: #e7e7e7; display: flex; gap: 7px; }
.shortcut { height: 49px; border-radius: 3px; color: #fff; display: flex; flex-direction: column; align-items: center; font-size: 16px; font-weight: 400; }
.shortcut svg { height: 18px; width: 20px; margin: 3px 0 2px; }
.shortcut span { line-height: 28px; font-weight: 350; }
.shortcut--dash { width: 95px; margin-right: 1px; background: linear-gradient(#e63946 23px, #d03340 23px); }
.shortcut--home { width: 89px; background: linear-gradient(#e63946 23px, #d03340 23px); }
.shortcut--cal { width: 81px; margin-right: 1px; background: linear-gradient(#17a168 23px, #14915e 23px); }
.shortcut--badge { width: 71px; background: linear-gradient(#ff9029 23px, #e28023 23px); }
.shortcut--all { width: 95px; background: linear-gradient(#1d78c4 23px, #1a6bb0 23px); }

.coursebar { height: 52px; padding: 1px 0 0 193px; border-bottom: 1px solid #e3e3e3; display: flex; align-items: center;
  background: repeating-linear-gradient(135deg, transparent 0 8.500px, rgba(0,0,0,.05) 9px 9.500px, transparent 10px 10.600px), linear-gradient(#fff, #f3f3f3); }
h1, h2, h3 { margin: 0; font-weight: 400; color: #000; }
h1 { font-size: 25px; }

.columns { padding: 50px 193px 0; display: flex; gap: 38px; }
.content { width: 1125px; flex: none; }
.course-dash { width: 225px; height: 49px; margin-left: auto; padding: 0 5px 0 18px; border: 1px solid #e6e6e6; border-radius: 3px; background: #fafafa; display: flex; align-items: center; justify-content: space-between; }
.course-dash b, .block__head b { display: grid; place-items: center; color: #fff; border-radius: 3px; }
.course-dash b { width: 36px; height: 36px; background: #e63946; }
.course-dash svg { width: 19px; height: 19px; }
h2 { margin-top: 14px; font-size: 30px; line-height: 40px; }
.intro { margin: 42px 0 0; line-height: 28px; }
.tabs { height: 49px; margin: 38px 0 0 4px; display: flex; gap: 6px; border-bottom: 2px solid #e63946; color: #222; }
.tabs__item { background: #f0f0f0; border-radius: 3px 3px 0 0; text-align: center; line-height: 48px; width: 119px; height: 47px; }
.tabs__item--on { width: 124px; background: #e63946; color: #fff; }
.tabs__item--sessions { width: 126px; }
.period { height: 47px; margin: 26px 0 0; padding-left: 103px; display: flex; align-items: center; gap: 2px; }
.period__arrow { width: 14px; height: 14px; margin-bottom: 2px; color: #000; }
.period__month { width: 100px; height: 47px; border: 1px solid #354652; border-radius: 3px; background: #455866; color: #fff; text-align: center; line-height: 45px; }
.views { margin-left: auto; padding-right: 3px; display: flex; gap: 5px; color: #111; }
.views > * { height: 46px; line-height: 44px; text-align: center; border: 1px solid #aaa; border-radius: 6px; }
.views__all { width: 35px; } .views__past { width: 76px; } .views .views__months { width: 75px; border-color: transparent; color: #666; } .views__weeks { width: 70px; } .views__days { width: 56px; }
.table { margin-top: 26px; border-top: 1px solid #dee2e6; font-size: 16px; }
.table__row { display: grid; grid-template-columns: 127px 580px 88px 138px 146px; padding-left: 4px; }
.table__row--head { height: 48px; line-height: 46px; border-bottom: 2px solid #dee2e6; font-weight: 700; color: #000; }
.table__row--head .center { text-align: center; }
.table__row--body { height: 58px; padding-top: 3px; line-height: 26px; background: #f2f2f2; color: #222; white-space: nowrap; }
.submit { grid-column: 4; padding-left: 32px; }
hr { margin: 19px 0 0; border: 0; height: 1px; background: #ccc; }
.stats { margin: 25px 0 0; display: grid; grid-template-columns: 266px 1fr; column-gap: 3px; line-height: 33px; color: #444; white-space: nowrap; }
.stats dt { display: flex; justify-content: flex-end; } .stats dd { margin: 0; }

.block { width: 350px; height: 700px; border: 1px solid #d9d9d9; border-radius: 3px; background: #fcfcfc; }
.block__head { height: 54px; padding-left: 8px; border-bottom: 1px solid #d9d9d9; display: flex; align-items: center; gap: 11px; background: repeating-linear-gradient(45deg, #f3f3f3 0 8.500px, #ebebeb 9px 9.800px, #f3f3f3 10.600px); }
.block__head b { width: 37px; height: 37px; background: #1d78c4; }
.block__head svg { width: 19px; height: 19px; }
h3 { font-size: 22.500px; padding-top: 1px; }
.tree { padding-top: 26px; }
.branch { margin-top: -3.700px; }
.node { height: 38.400px; display: flex; align-items: center; white-space: nowrap; }
.node svg { color: #333; }
.down { width: 13px; height: 10px; margin-right: 7px; }
.right { width: 8px; height: 13px; margin-right: 12px; }
.glyph { width: 17px; height: 16px; margin-right: 6px; }
.node--1 { padding-left: 19px; } .node--2 { padding-left: 38px; } .node--icon2 { padding-left: 33px; } .node--3 { padding-left: 57px; } .node--4 { padding-left: 75px; } .node--icon4 { padding-left: 71px; }
.node--wrap { padding-left: 75px; height: 24px; }

.hide-sidebars { position: absolute; left: 0; top: 266px; width: 34px; height: 133px; padding-right: 1px; background: #e63946; color: #fff; display: grid; place-items: center; }
.hide-sidebars span { writing-mode: vertical-rl; transform: rotate(180deg); font-size: 16px; font-weight: 400; }

.scrollbar { width: 21px; background: #f1f1f1; display: flex; flex-direction: column; align-items: center; }
.scrollbar svg { width: 10px; height: 6px; }
.scrollbar__up { margin-top: 10px; color: #8b8b8b; }
.scrollbar__thumb { width: 17px; height: 273px; margin-top: 6px; background: #c1c1c1; }
.scrollbar__down { margin: auto 0 6px; color: #505050; }

/* Taskbar */
.taskbar { height: 50px; flex: none; display: flex; color: #fff; background: linear-gradient(90deg, #3b2013, #4a2918 15%, #553020 25%, #643414 33%, #5f3016 45%, #6a3c18 60%, #5d3614 72%, #5c3012 80%, #673d1b 88%, #4c2c14 92%, #5a381b 100%); }
.task { width: 62px; display: grid; place-items: center; }
.task--start { width: 60px; margin-right: 3px; }
.task--on { width: 61px; margin-left: 1px; background: #98531f; border-bottom: 3px solid #ffcfa6; padding-top: 3px; }
.task__win { width: 21px; height: 21px; } .task__cam { width: 30px; height: 24px; } .task__shield { width: 22px; height: 23px; } .task__hex { width: 26px; height: 28px; } .task__idm { width: 29px; height: 28px; } .task__fox { width: 28px; height: 28px; } .task__xampp { width: 30px; height: 30px; } .task__folder { width: 28px; height: 24px; } .task__chrome { width: 28px; height: 28px; }
.word { width: 29px; height: 27px; padding-left: 7px; position: relative; }
.word i { display: block; height: 27px; background: linear-gradient(#41a5ee 25%, #2b7cd3 25% 50%, #185abd 50% 75%, #103f91 75%); }
.word b { position: absolute; left: 0; top: 6px; width: 16px; height: 16px; background: #185abd; font: 700 11px/16px "Open Sans", sans-serif; text-align: center; }
.tray { margin-left: auto; padding-right: 5px; border-right: 1px solid #a08c78; margin-right: 5px; display: flex; align-items: center; width: 266px; font-family: "Open Sans", sans-serif; }
.tray svg { fill: none; stroke: #fff; stroke-width: 1.300px; }
.tray__up { width: 16px; height: 10px; }
.tray__cam { width: 15px; height: 19px; margin-left: 16px; }
.tray__wifi { width: 15px; height: 15px; margin-left: 14px; }
.tray__bat { width: 19px; height: 12px; margin-left: 13px; }
.clock { width: 84px; margin-left: 8px; display: flex; flex-direction: column; align-items: center; font-size: 15px; line-height: 23px; font-weight: 400; letter-spacing: -.45px; }
.tray .tray__note { width: 20px; height: 20px; margin-left: 20px; }
```
